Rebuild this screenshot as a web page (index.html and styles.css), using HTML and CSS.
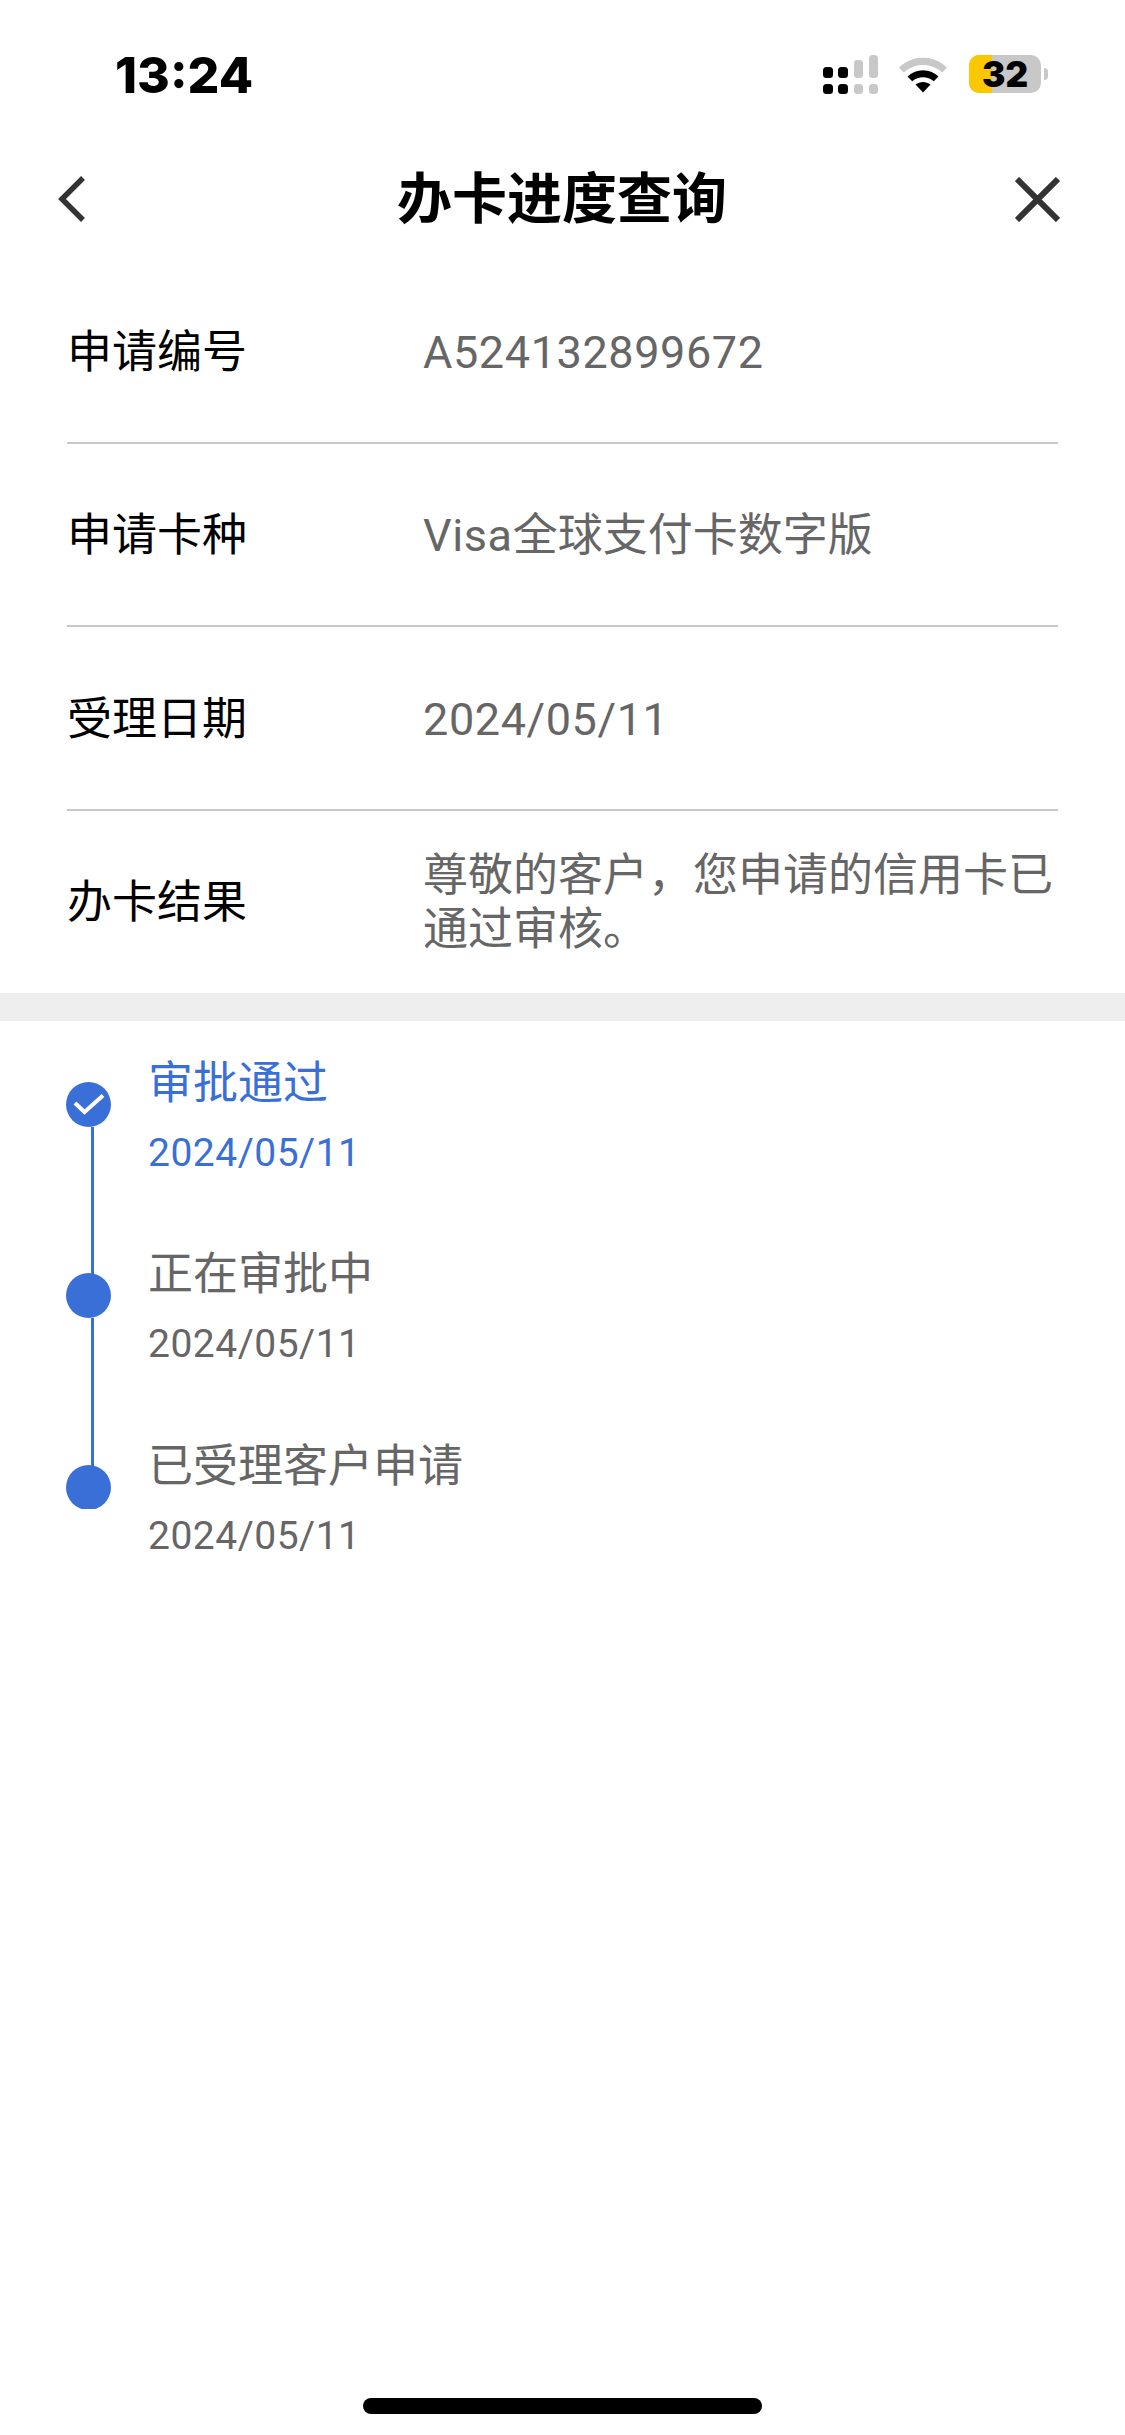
FILE: index.html
```html
<!DOCTYPE html>
<html lang="zh-CN">
<head>
<meta charset="utf-8">
<title>办卡进度查询</title>
<link rel="stylesheet" href="styles.css">
</head>
<body>
<div class="page">
  <div class="status-bar">
    <span class="time">13:24</span>
    <div class="status-icons">
      <svg class="signal" width="58" height="40" viewBox="0 0 58 40">
        <rect x="1" y="12" width="10" height="11" rx="3.5" fill="#000"/>
        <rect x="16" y="12" width="10" height="11" rx="3.5" fill="#000"/>
        <rect x="32" y="5" width="9" height="18" rx="3.5" fill="#c8c8c8"/>
        <rect x="47" y="0" width="9" height="23" rx="3.5" fill="#c8c8c8"/>
        <rect x="1" y="29" width="10" height="10" rx="3.5" fill="#000"/>
        <rect x="16" y="29" width="10" height="10" rx="3.5" fill="#000"/>
        <rect x="32" y="29" width="9" height="10" rx="3.5" fill="#c8c8c8"/>
        <rect x="47" y="29" width="9" height="10" rx="3.5" fill="#c8c8c8"/>
      </svg>
      <svg class="wifi" width="48" height="36" viewBox="0 0 48 36">
        <path d="M0 10.500C13.500 -2.500 34.500 -2.500 48 10.500L43.200 15.500C32 5.500 16 5.500 4.800 15.500Z" fill="#c8c8c8"/>
        <path d="M8.500 19.500C17.500 11.300 30.500 11.300 39.500 19.500L34.800 24.300C28.500 18.800 19.500 18.800 13.200 24.300Z" fill="#000"/>
        <path d="M16.500 27.500C21 24 27 24 31.500 27.500L24 35.500Z" fill="#000"/>
      </svg>
      <div class="battery">
        <div class="battery-body">
          <span class="battery-level"></span>
          <span class="battery-text">32</span>
        </div>
        <span class="battery-nub"></span>
      </div>
    </div>
  </div>

  <header class="nav">
    <svg class="nav-back" width="30" height="48" viewBox="0 0 30 48">
      <path d="M26 3L5 24L26 45" fill="none" stroke="#333" stroke-width="5.500"/>
    </svg>
    <h1 class="nav-title">办卡进度查询</h1>
    <svg class="nav-close" width="45" height="45" viewBox="0 0 45 45">
      <path d="M2 2L43 43M43 2L2 43" fill="none" stroke="#333" stroke-width="6"/>
    </svg>
  </header>

  <section class="info">
    <div class="row">
      <div class="label">申请编号</div>
      <div class="value"><span class="latin">A524132899672</span></div>
    </div>
    <div class="row">
      <div class="label">申请卡种</div>
      <div class="value"><span class="latin">Visa</span>全球支付卡数字版</div>
    </div>
    <div class="row">
      <div class="label">受理日期</div>
      <div class="value"><span class="latin">2024/05/11</span></div>
    </div>
    <div class="row">
      <div class="label">办卡结果</div>
      <div class="value">尊敬的客户，您申请的信用卡已通过审核。</div>
    </div>
  </section>

  <div class="band"></div>

  <section class="timeline">
    <div class="step step-done">
      <div class="track">
        <span class="dot">
          <svg width="32" height="22" viewBox="0 0 32 22"><path d="M2 10L11.500 19L30 2.500" fill="none" stroke="#fff" stroke-width="4"/></svg>
        </span>
        <span class="connector"></span>
      </div>
      <div class="step-text">
        <div class="step-title">审批通过</div>
        <div class="step-date">2024/05/11</div>
      </div>
    </div>
    <div class="step">
      <div class="track">
        <span class="dot"></span>
        <span class="connector"></span>
      </div>
      <div class="step-text">
        <div class="step-title">正在审批中</div>
        <div class="step-date">2024/05/11</div>
      </div>
    </div>
    <div class="step step-last">
      <div class="track">
        <span class="dot"></span>
      </div>
      <div class="step-text">
        <div class="step-title">已受理客户申请</div>
        <div class="step-date">2024/05/11</div>
      </div>
    </div>
  </section>

  <div class="home-bar"><span class="home-indicator"></span></div>
</div>
</body>
</html>
```
FILE: styles.css
```css
* { box-sizing: border-box; }
html, body { margin: 0; padding: 0; background: #fff; }
body { font-family: Roboto, "Noto Sans CJK SC", sans-serif; overflow: hidden; }
.page { width: 1125px; height: 2435px; display: flex; flex-direction: column; overflow: hidden; }

.status-bar { height: 138px; padding: 46px 77px 0 115px; display: flex; justify-content: space-between; align-items: flex-start; }
.time { font-family: Inter, sans-serif; font-size: 50px; line-height: 58px; font-weight: 800; color: #000; }
.status-icons { display: flex; align-items: flex-start; padding-top: 9px; }
.signal { margin-right: 19px; }
.wifi { margin-top: 2px; margin-right: 22px; }
.battery { display: flex; align-items: center; height: 38px; }
.battery-body { position: relative; width: 72px; height: 38px; border-radius: 10px; background: #c8c8c8; display: flex; align-items: center; justify-content: center; }
.battery-level { position: absolute; left: 0; top: 0; bottom: 0; width: 23px; background: #fac800; border-radius: 10px 0 0 10px; }
.battery-text { position: relative; font-family: Inter, sans-serif; font-weight: 900; font-size: 35px; line-height: 38px; color: #000; }
.battery-nub { width: 4px; height: 12px; margin-left: 3px; background: #c8c8c8; border-radius: 0 4px 4px 0; }

.nav { height: 122px; padding: 0 65px 0 57px; display: grid; grid-template-columns: 1fr auto 1fr; align-items: center; }
.nav-title { margin: 0 0 0 7px; font-size: 55px; line-height: 70px; font-weight: 700; color: #000; }
.nav-back { justify-self: start; }
.nav-close { justify-self: end; }

.info { padding: 0 67px; }
.row { display: flex; align-items: center; height: 183.500px; padding-top: 4px; border-bottom: 2px solid #c8c8c8; }
.row:last-child { height: 182px; padding-top: 2px; border-bottom: 0; }
.label { width: 356px; flex: none; font-size: 45px; line-height: 54px; color: #000; }
.value { font-size: 45px; line-height: 54px; color: #666; }
.latin { letter-spacing: 0.6px; }

.band { height: 28px; background: #eeeeee; }

.timeline { padding: 36px 0 0 66px; }
.step { display: flex; height: 191.500px; }
.track { width: 45px; flex: none; margin-right: 37px; padding-top: 25px; display: flex; flex-direction: column; }
.dot { flex: none; width: 45px; height: 45px; border-radius: 50%; background: #3a6fd8; display: flex; align-items: center; justify-content: center; }
.connector { flex: 1; width: 3px; margin-left: 25px; margin-bottom: -26px; background: #3a6fd8; }
.step-last .track { height: 69px; overflow: hidden; }
.step-text { display: flex; flex-direction: column; }
.step-title { font-size: 45px; line-height: 54px; color: #666; }
.step-date { margin-top: 17px; font-size: 39px; line-height: 50px; letter-spacing: 0.5px; color: #666; }
.step-done .step-title, .step-done .step-date { color: #3a6fd8; }

.home-bar { margin-top: auto; height: 37px; display: flex; justify-content: center; }
.home-indicator { width: 399px; height: 16px; border-radius: 8px; background: #000; }
```
